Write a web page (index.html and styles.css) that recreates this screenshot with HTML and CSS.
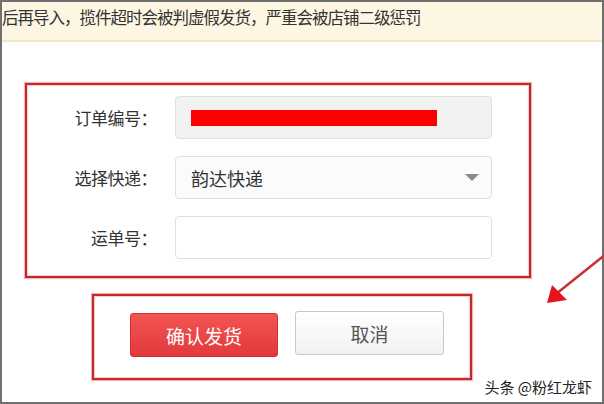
FILE: index.html
```html
<!DOCTYPE html>
<html>
<head>
  <title>发货</title>
  <meta name="viewport" content="width=device-width, initial-scale=1.0">
  <link rel="stylesheet" href="styles.css">
</head>
<body>
  <div class="frame">
    <div class="notice">后再导入，揽件超时会被判虚假发货，严重会被店铺二级惩罚</div>

    <div class="mark-box form-box">
      <div class="row">
        <label class="label">订单编号：</label>
        <div class="field field-readonly">
          <span class="redact"></span>
        </div>
      </div>
      <div class="row">
        <label class="label">选择快递：</label>
        <div class="field field-select">
          <span class="value">韵达快递</span>
          <span class="caret"></span>
        </div>
      </div>
      <div class="row">
        <label class="label">运单号：</label>
        <input class="field field-input" type="text">
      </div>
    </div>

    <div class="mark-box button-box">
      <button class="btn btn-primary">确认发货</button>
      <button class="btn btn-cancel">取消</button>
    </div>

    <div class="watermark">头条 @粉红龙虾</div>
  </div>

  <!-- annotation arrow -->
  <svg class="arrow" width="604" height="404" viewBox="0 0 604 404">
    <line x1="606" y1="254" x2="556" y2="294" stroke="#c93034" stroke-width="2.5"/>
    <polygon points="547,303 552,285 567,300" fill="#e3141c"/>
  </svg>
</body>
</html>
```

FILE: styles.css
```css
body {
  margin: 0;
  width: 604px;
  height: 404px;
  position: relative;
  overflow: hidden;
  font-family: "Noto Sans CJK SC", "Liberation Sans", sans-serif;
  color: #333;
  background: #fff;
}

.frame {
  box-sizing: border-box;
  width: 604px;
  height: 404px;
  border: 2px solid #707070;
  position: relative;
  overflow: hidden;
}

.notice {
  height: 38px;
  line-height: 31px;
  font-size: 16.5px;
  letter-spacing: -1px;
  color: #333;
  white-space: nowrap;
  background: #fdf6e3;
  border-bottom: 2px solid #f1e6c8;
  padding-left: 0;
}

.mark-box {
  box-sizing: border-box;
  border: 2px solid #bf2a30;
  box-shadow: 0 0 1px 1px rgba(235, 120, 120, 0.55), inset 0 0 1px 1px rgba(240, 150, 150, 0.5);
}

.form-box {
  width: 506px;
  height: 195px;
  margin: 41px 0 0 23px;
  padding: 11px 0 0 0;
  display: flex;
  flex-direction: column;
  gap: 17px;
}

.row {
  display: flex;
  align-items: center;
  height: 43px;
}

.label {
  width: 127px;
  margin-left: 3px;
  margin-right: 18px;
  text-align: right;
  font-size: 17px;
  letter-spacing: -0.5px;
  color: #333;
}

.field {
  box-sizing: border-box;
  width: 317px;
  height: 43px;
  border: 1px solid #e0e0e0;
  border-radius: 4px;
  display: flex;
  align-items: center;
  padding: 0 12px 0 15px;
  background: #fff;
}

.field-readonly {
  background: #f2f2f2;
}

.redact {
  display: block;
  width: 246px;
  height: 16px;
  background: #f00;
}

.field-select {
  justify-content: space-between;
  background: #fbfbfb;
}

.value {
  font-size: 18px;
  color: #333;
}

.caret {
  width: 0;
  height: 0;
  border-left: 7px solid transparent;
  border-right: 7px solid transparent;
  border-top: 7px solid #8a8a8a;
}

.field-input {
  font: inherit;
  outline: none;
}

.button-box {
  width: 380px;
  height: 86px;
  margin: 16px 0 0 90px;
  display: flex;
  align-items: flex-start;
  padding: 15px 0 0 36px;
  gap: 17px;
}

.btn {
  box-sizing: border-box;
  width: 148px;
  height: 44px;
  border-radius: 3px;
  font-family: inherit;
  font-size: 19px;
  cursor: pointer;
}

.btn-primary {
  margin-top: 2px;
  color: #fff;
  background: linear-gradient(#f45454, #e13a3c);
  border: 1px solid #d23236;
}

.btn-cancel {
  width: 149px;
  color: #555;
  background: linear-gradient(#fff, #f1f1f1);
  border: 1px solid #c9c9c9;
}

.watermark {
  position: absolute;
  right: 10px;
  bottom: 5px;
  font-size: 15px;
  color: #222;
  text-shadow: 0 0 2px #fff, 0 0 2px #fff;
}

.arrow {
  position: absolute;
  top: 0;
  left: 0;
  pointer-events: none;
}
```
